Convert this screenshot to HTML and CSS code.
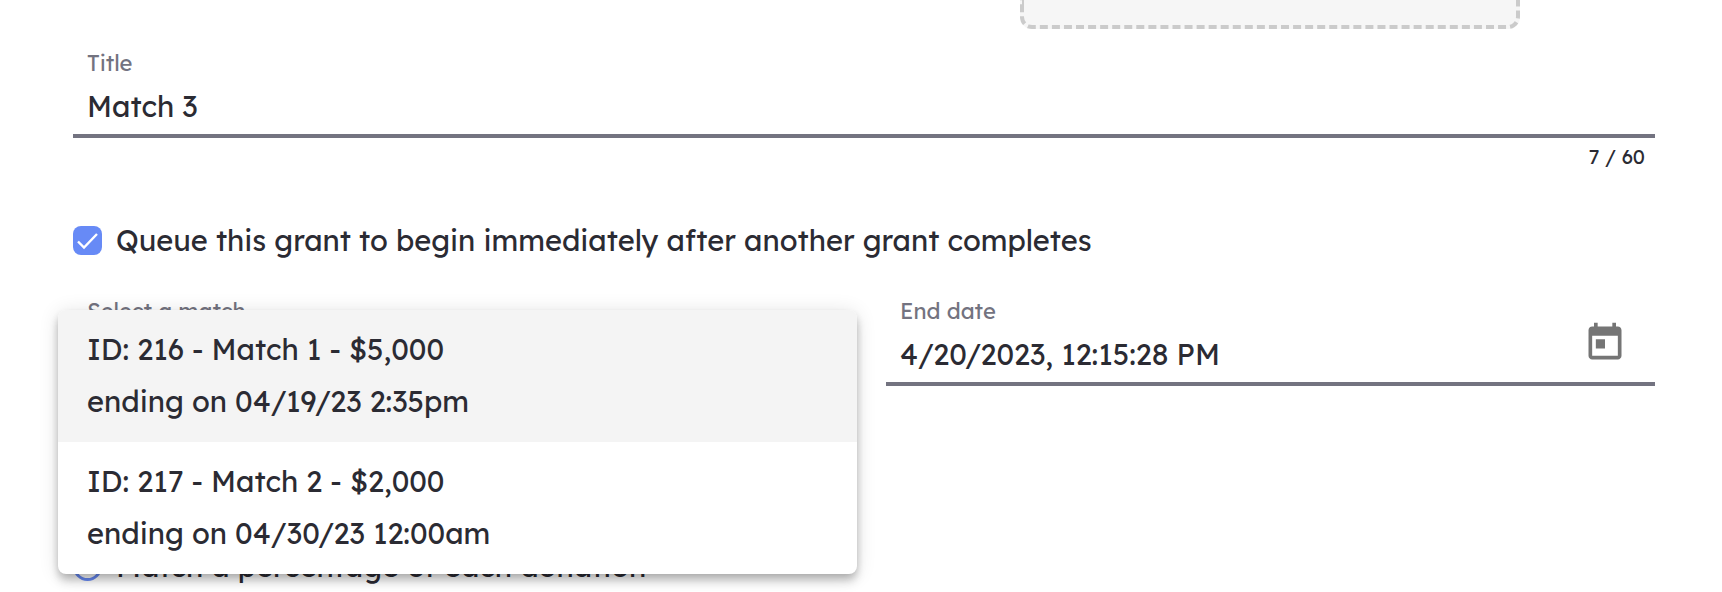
FILE: index.html
```html
<!DOCTYPE html>
<html lang="en">
<head>
    <meta charset="UTF-8">
    <meta name="viewport" content="width=device-width, initial-scale=1.0">
    <title>Match Grant</title>
    <link rel="stylesheet" href="styles.css">
</head>
<body>
<form class="grant-form">
    <div class="upload-row">
        <div class="dropzone"></div>
    </div>

    <div class="field">
        <label for="title">Title</label>
        <input type="text" id="title" name="title" value="Match 3" maxlength="60">
    </div>
    <div class="counter">7 / 60</div>

    <div class="check-row">
        <input type="checkbox" id="queue" name="queue" checked>
        <label for="queue">Queue this grant to begin immediately after another grant completes</label>
    </div>

    <div class="columns">
        <div class="field">
            <label for="match">Select a match</label>
            <select id="match" name="match">
                <option value=""></option>
            </select>

            <!-- Open match list -->
            <ul class="options" role="listbox" aria-label="Select a match">
                <li class="option active" role="option" aria-selected="true">ID: 216 - Match 1 - $5,000<br>ending on 04/19/23 2:35pm</li>
                <li class="option" role="option" aria-selected="false">ID: 217 - Match 2 - $2,000<br>ending on 04/30/23 12:00am</li>
            </ul>
        </div>

        <div class="field">
            <label for="end-date">End date</label>
            <div class="date-box">
                <input type="text" id="end-date" name="end-date" value="4/20/2023, 12:15:28 PM">
                <button type="button" class="calendar" aria-label="Open calendar">
                    <svg viewBox="0 0 24 24" width="44" height="44" fill="currentColor"><path d="M19 3h-1V1h-2v2H8V1H6v2H5c-1.11 0-1.99.9-1.99 2L3 19c0 1.1.89 2 2 2h14c1.1 0 2-.9 2-2V5c0-1.1-.9-2-2-2zm0 16H5V8h14v11zM7 10h5v5H7z"/></svg>
                </button>
            </div>
        </div>
    </div>

    <div class="check-row type-row">
        <input type="radio" id="percentage" name="type" value="percentage">
        <label for="percentage">Match a percentage of each donation</label>
    </div>
</form>
</body>
</html>
```
FILE: styles.css
```css
* {
    box-sizing: border-box;
}

body {
    margin: 0;
    min-height: 100vh;
    background: #fff;
    color: #2b2b33;
    font-family: Lexend, Inter, sans-serif;
    font-size: 29px;
}

.grant-form {
    padding: 0 67px 0 73px;
}

/* Image upload */
.upload-row {
    display: flex;
    justify-content: flex-end;
    padding-right: 135px;
}

.dropzone {
    width: 500px;
    height: 29px;
    background: #f6f6f6;
    border: 4px dashed #cbcbcb;
    border-top: none;
    border-radius: 0 0 12px 12px;
}

/* Fields */
.field {
    position: relative;
    margin-top: 20px;
}

.field label {
    display: block;
    padding-left: 14px;
    color: #737380;
    font-size: 22px;
    line-height: 28px;
}

.field input,
.field select {
    display: block;
    width: 100%;
    height: 61px;
    padding: 0 14px;
    border: none;
    border-bottom: 4px solid #737380;
    border-radius: 0;
    background: none;
    color: inherit;
    font: inherit;
    outline: none;
    appearance: none;
}

.counter {
    margin-top: 5px;
    padding-right: 10px;
    font-size: 20px;
    line-height: 28px;
    text-align: right;
}

/* Checkbox and radio rows */
.check-row {
    display: flex;
    align-items: center;
    gap: 14px;
    height: 40px;
    margin-top: 49px;
}

.check-row input {
    flex: none;
    width: 29px;
    height: 29px;
    margin: 0;
    appearance: none;
}

.check-row input[type="checkbox"] {
    border-radius: 8px;
    background: #678af6 url("data:image/svg+xml,%3Csvg xmlns='http://www.w3.org/2000/svg' viewBox='0 0 29 29'%3E%3Cpath d='M5 15.500l6 6L24 8' fill='none' stroke='white' stroke-width='2.400'/%3E%3C/svg%3E");
}

.check-row input[type="radio"] {
    border: 3px solid #678af6;
    border-radius: 50%;
}

.type-row {
    margin-top: 160px;
}

/* Match and end date */
.columns {
    display: grid;
    grid-template-columns: 1fr 1fr;
    gap: 44px;
    margin-top: 37px;
}

.columns .field {
    margin-top: 0;
}

.date-box {
    display: flex;
    align-items: flex-start;
    border-bottom: 4px solid #737380;
}

.date-box input {
    flex: 1;
    height: 57px;
    border-bottom: none;
}

.calendar {
    display: flex;
    margin: -4px 28px 0 0;
    padding: 0;
    height: 44px;
    border: none;
    background: none;
    color: #757575;
    cursor: pointer;
}

.options {
    position: absolute;
    top: 13px;
    left: -15px;
    right: -15px;
    z-index: 1;
    margin: 0;
    padding: 0;
    list-style: none;
    background: #fff;
    border-radius: 8px;
    overflow: hidden;
    box-shadow: 0 4px 8px -2px rgba(0, 0, 0, 0.2), 0 8px 10px rgba(0, 0, 0, 0.14), 0 2px 20px rgba(0, 0, 0, 0.12);
}

.option {
    padding: 13px 29px 15px;
    line-height: 52px;
    cursor: pointer;
}

.option.active {
    background: #f4f4f4;
}
```
